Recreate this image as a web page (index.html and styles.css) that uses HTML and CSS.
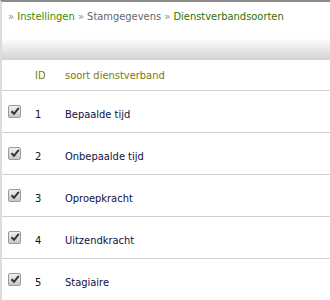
FILE: index.html
```
<!DOCTYPE html>
<html>
    <head>
        <title>Dienstverbandsoorten</title>
        <link rel="stylesheet" href="styles.css">
    </head>
    <body>
        <div class="page">
            <div class="crumbs">
                <span class="sep">»</span> <a class="crumb-link">Instellingen</a>
                <span class="sep">»</span> <span class="crumb-mid">Stamgegevens</span>
                <span class="sep">»</span> <span class="crumb-cur">Dienstverbandsoorten</span>
            </div>
            <div class="band"></div>
            <table class="list">
                <tr class="head">
                    <td class="c-check"></td>
                    <td class="c-id">ID</td>
                    <td class="c-name">soort dienstverband</td>
                </tr>
                <tr>
                    <td class="c-check"><span class="box"><svg width="10" height="10" viewBox="0 0 10 10"><path d="M1.5 5.2 L4 7.8 L8.8 1.8" fill="none" stroke="#333" stroke-width="2"/></svg></span></td>
                    <td class="c-id">1</td>
                    <td class="c-name">Bepaalde tijd</td>
                </tr>
                <tr>
                    <td class="c-check"><span class="box"><svg width="10" height="10" viewBox="0 0 10 10"><path d="M1.5 5.2 L4 7.8 L8.8 1.8" fill="none" stroke="#333" stroke-width="2"/></svg></span></td>
                    <td class="c-id">2</td>
                    <td class="c-name">Onbepaalde tijd</td>
                </tr>
                <tr>
                    <td class="c-check"><span class="box"><svg width="10" height="10" viewBox="0 0 10 10"><path d="M1.5 5.2 L4 7.8 L8.8 1.8" fill="none" stroke="#333" stroke-width="2"/></svg></span></td>
                    <td class="c-id">3</td>
                    <td class="c-name">Oproepkracht</td>
                </tr>
                <tr>
                    <td class="c-check"><span class="box"><svg width="10" height="10" viewBox="0 0 10 10"><path d="M1.5 5.2 L4 7.8 L8.8 1.8" fill="none" stroke="#333" stroke-width="2"/></svg></span></td>
                    <td class="c-id">4</td>
                    <td class="c-name">Uitzendkracht</td>
                </tr>
                <tr>
                    <td class="c-check"><span class="box"><svg width="10" height="10" viewBox="0 0 10 10"><path d="M1.5 5.2 L4 7.8 L8.8 1.8" fill="none" stroke="#333" stroke-width="2"/></svg></span></td>
                    <td class="c-id">5</td>
                    <td class="c-name">Stagiaire</td>
                </tr>
            </table>
        </div>
    </body>
</html>
```

FILE: styles.css
```
body {
    margin: 0;
    font-family: "DejaVu Sans Condensed", "DejaVu Sans", Verdana, sans-serif;
    font-size: 11px;
    background: #fff;
}
.page {
    border-top: 2px solid #8c8c8c;
    border-left: 2px solid #dcdcdc;
    min-height: 298px;
}
.crumbs {
    height: 36px;
    padding-left: 6px;
    line-height: 30px;
    color: #6f6f6f;
}
.sep {
    color: #8a8a8a;
}
.crumb-link {
    color: #3c8a00;
}
.crumb-mid {
    color: #666;
}
.crumb-cur {
    color: #2f6f00;
}
.band {
    height: 22px;
    background: linear-gradient(#ffffff, #d2d2d2);
}
.list {
    width: 100%;
    border-collapse: collapse;
    font-size: 11px;
}
.list td {
    height: 41px;
    border-bottom: 1px solid #d0d0d0;
    padding: 0;
    color: #111;
}
.list tr.head td {
    height: 30px;
    color: #7a7a10;
}
.list tr + tr td.c-id,
.list tr + tr td.c-name {
    height: 36px;
    padding-top: 5px;
}
.list tr + tr td.c-check {
    height: 40px;
    padding-bottom: 1px;
}
.c-check {
    width: 27px;
    padding-left: 6px !important;
}
.c-id {
    width: 30px;
}
.c-name {
    color: #101040 !important;
}
.list tr.head .c-name {
    color: #7a7a10 !important;
}
.box {
    display: block;
    width: 11px;
    height: 11px;
    border: 1px solid #9a9a9a;
    border-radius: 2px;
    background: linear-gradient(#f0f0f0, #c8c8c8);
    position: relative;
}
.box svg {
    position: absolute;
    left: 1px;
    top: 0;
}
```
